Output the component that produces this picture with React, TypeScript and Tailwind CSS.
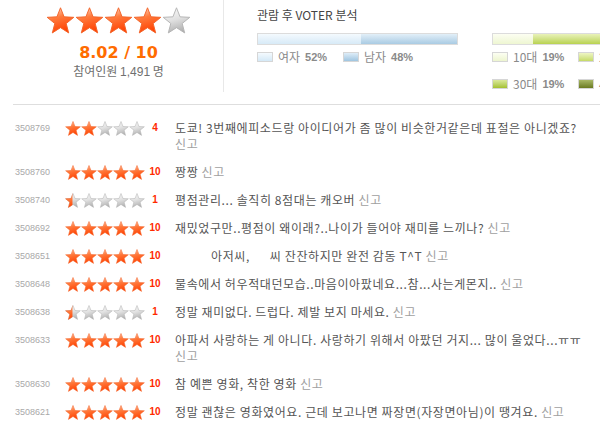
import { useId } from 'react';

type StarKind = 'on' | 'off' | 'half';

const STAR_POINTS =
  '15,0.8 18.7,10.2 28.8,10.7 20.9,17.1 23.5,26.9 15,21.4 6.5,26.9 9.1,17.1 1.2,10.7 11.3,10.2';

function Star({ kind, className }: { kind: StarKind; className: string }) {
  const id = useId().replace(/:/g, '');
  return (
    <svg viewBox="0 0 30 28" className={className}>
      <defs>
        <linearGradient id={`o${id}`} x1="0.2" y1="0" x2="0.5" y2="1">
          <stop offset="0" stopColor="#ffd9c6" />
          <stop offset="0.4" stopColor="#ff7a3c" />
          <stop offset="1" stopColor="#ff4000" />
        </linearGradient>
        <linearGradient id={`g${id}`} x1="0.2" y1="0" x2="0.5" y2="1">
          <stop offset="0" stopColor="#fbfbfb" />
          <stop offset="0.5" stopColor="#e0e0e0" />
          <stop offset="1" stopColor="#b0b0b0" />
        </linearGradient>
        <clipPath id={`c${id}`}>
          <rect x="0" y="0" width="14" height="28" />
        </clipPath>
      </defs>
      {kind !== 'on' && (
        <polygon points={STAR_POINTS} fill={`url(#g${id})`} stroke="#b4b4b4" strokeWidth="1" strokeLinejoin="round" />
      )}
      {kind === 'on' && (
        <polygon points={STAR_POINTS} fill={`url(#o${id})`} stroke="#f3642a" strokeWidth="1" strokeLinejoin="round" />
      )}
      {kind === 'half' && (
        <polygon
          points={STAR_POINTS}
          fill={`url(#o${id})`}
          stroke="#f3642a"
          strokeWidth="1"
          strokeLinejoin="round"
          clipPath={`url(#c${id})`}
        />
      )}
    </svg>
  );
}

function starKinds(score: number): StarKind[] {
  const half = score / 2;
  return [0, 1, 2, 3, 4].map((i) => (half >= i + 1 ? 'on' : half > i ? 'half' : 'off'));
}

const reviews: { id: string; score: number; text: React.ReactNode }[] = [
  { id: '3508769', score: 4, text: '도쿄! 3번째에피소드랑 아이디어가 좀 많이 비슷한거같은데 표절은 아니겠죠?' },
  { id: '3508760', score: 10, text: '짱짱' },
  { id: '3508740', score: 1, text: '평점관리... 솔직히 8점대는 캐오버' },
  { id: '3508692', score: 10, text: '재밌었구만..평점이 왜이래?..나이가 들어야 재미를 느끼나?' },
  {
    id: '3508651',
    score: 10,
    text: (
      <>
        <span className="inline-block w-[36px]" />
        아저씨,
        <span className="inline-block w-[20px]" />씨 잔잔하지만 완전 감동 T^T
      </>
    ),
  },
  { id: '3508648', score: 10, text: '물속에서 허우적대던모습..마음이아팠네요...참...사는게몬지..' },
  { id: '3508638', score: 1, text: '정말 재미없다. 드럽다. 제발 보지 마세요.' },
  { id: '3508633', score: 10, text: '아파서 사랑하는 게 아니다. 사랑하기 위해서 아팠던 거지... 많이 울었다...ㅠㅠ' },
  { id: '3508630', score: 10, text: '참 예쁜 영화, 착한 영화' },
  { id: '3508621', score: 10, text: '정말 괜찮은 영화였어요. 근데 보고나면 짜장면(자장면아님)이 땡겨요.' },
];

function Legend({ swatch, label, pct }: { swatch: string; label: string; pct: string }) {
  return (
    <div className="flex items-center w-[86px] h-[16px] shrink-0">
      <span className={`w-[16px] h-[10px] border border-[#d6d6d6] ${swatch}`} />
      <span className="ml-[5px] text-[12px] text-[#8a8a8a]">{label}</span>
      <span className="ml-[5px] text-[11px] font-bold text-[#8a8a8a] font-['Liberation_Sans',sans-serif]">{pct}</span>
    </div>
  );
}

export default function App() {
  return (
    <div className="w-[600px] h-[425px] overflow-hidden bg-white font-['Noto_Sans_CJK_KR',sans-serif] text-[12px] text-[#4a4a4a]">
      {/* rating summary + voter analysis */}
      <div className="flex h-[95px]">
        <div className="w-[224px] h-[92px] shrink-0 border-r border-[#e8e8e8] pl-[14px] pt-[7px] flex flex-col items-center">
          <div className="flex">
            {starKinds(8).map((k, i) => (
              <Star key={i} kind={k} className="w-[29px] h-[27px]" />
            ))}
          </div>
          <div className="mt-[9px] leading-[20px] text-[16px] font-bold text-[#ff6c00] font-['DejaVu_Sans',sans-serif]">
            8.02 / 10
          </div>
          <div className="leading-[16px] text-[#707070]">
            참여인원 <span className="font-['Liberation_Sans',sans-serif]">1,491</span> 명
          </div>
        </div>

        <div className="pl-[33px] pt-[7px] flex-1">
          <div className="leading-[16px] text-[#444]">관람 후 VOTER 분석</div>
          <div className="flex mt-[10px] gap-[34px]">
            <div className="w-[201px] shrink-0">
              <div className="flex h-[12px] border border-[#dcdcdc]">
                <div className="w-[52%] bg-gradient-to-b from-[#f4fafe] to-[#d7eaf7]" />
                <div className="flex-1 bg-gradient-to-b from-[#e2eff8] to-[#a9cbe3]" />
              </div>
              <div className="flex mt-[4px]">
                <Legend swatch="bg-gradient-to-b from-[#f4fafe] to-[#d4e9f7]" label="여자" pct="52%" />
                <Legend swatch="bg-gradient-to-b from-[#deedf8] to-[#9fc5e0]" label="남자" pct="48%" />
              </div>
            </div>
            <div className="w-[201px] shrink-0">
              <div className="flex h-[12px] border border-[#dcdcdc]">
                <div className="w-[40px] bg-gradient-to-b from-[#fcfef2] to-[#eef6d2]" />
                <div className="flex-1 bg-gradient-to-b from-[#e9f2b8] to-[#b9d24e]" />
              </div>
              <div className="flex mt-[4px]">
                <Legend swatch="bg-gradient-to-b from-[#fcfef2] to-[#edf5cf]" label="10대" pct="19%" />
                <Legend swatch="bg-gradient-to-b from-[#eef5c4] to-[#c6db66]" label="20대" pct="19%" />
              </div>
              <div className="flex mt-[11px]">
                <Legend swatch="bg-gradient-to-b from-[#dbe99a] to-[#a5c12c]" label="30대" pct="19%" />
                <Legend swatch="bg-gradient-to-b from-[#a9b866] to-[#6b7b20]" label="40대" pct="19%" />
              </div>
            </div>
          </div>
        </div>
      </div>

      {/* divider */}
      <div className="ml-[13px] mt-[9px] border-t border-[#dedede]" />

      {/* review list */}
      <div className="pl-[15px] pt-[9px]">
        {reviews.map((r) => (
          <div key={r.id} className="flex items-start py-[6px] leading-[16px]">
            <div className="w-[50px] shrink-0 text-[9px] text-[#a9a9a9] font-['Liberation_Sans',sans-serif]">{r.id}</div>
            <div className="w-[80px] h-[16px] shrink-0 flex items-center">
              {starKinds(r.score).map((k, i) => (
                <Star key={i} kind={k} className="w-[16px] h-[15px]" />
              ))}
            </div>
            <div className="w-[20px] shrink-0 text-center text-[10px] font-bold text-[#ff2a00] font-['Liberation_Sans',sans-serif]">
              {r.score}
            </div>
            <div className="ml-[10px] w-[425px] tracking-[0.6px] text-[#555] break-keep">
              {r.text} <span className="whitespace-nowrap text-[#a0a0a0]">신고</span>
            </div>
          </div>
        ))}
      </div>
    </div>
  );
}
